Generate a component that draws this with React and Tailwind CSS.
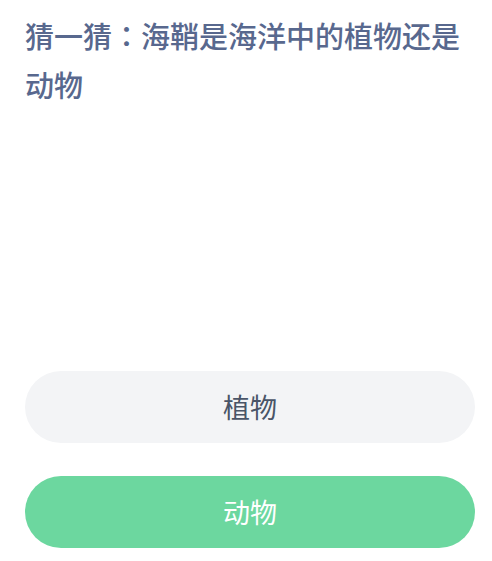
export default function App() {
  const font = { fontFamily: '"Noto Sans CJK SC", "Noto Sans", sans-serif' };
  return (
    <div className="w-[492px] h-[561px] bg-white flex flex-col pl-[25px] pr-[17px]" style={font}>
      <div className="pt-[11px] text-[29px] leading-[49px] text-[#58688e] font-medium">
        猜一猜<span style={{ fontFamily: '"Noto Sans CJK JP", sans-serif' }}>：</span>海鞘是海洋中的植物还是动物
      </div>
      <div className="flex-1" />
      <div className="flex flex-col gap-[33px] pb-[13px]">
        <button className="h-[72px] w-full rounded-full bg-[#f3f4f6] text-[27px] text-[#4a5568] flex items-center justify-center">
          植物
        </button>
        <button className="h-[72px] w-full rounded-full bg-[#6cd79f] text-[27px] text-white flex items-center justify-center">
          动物
        </button>
      </div>
    </div>
  );
}
